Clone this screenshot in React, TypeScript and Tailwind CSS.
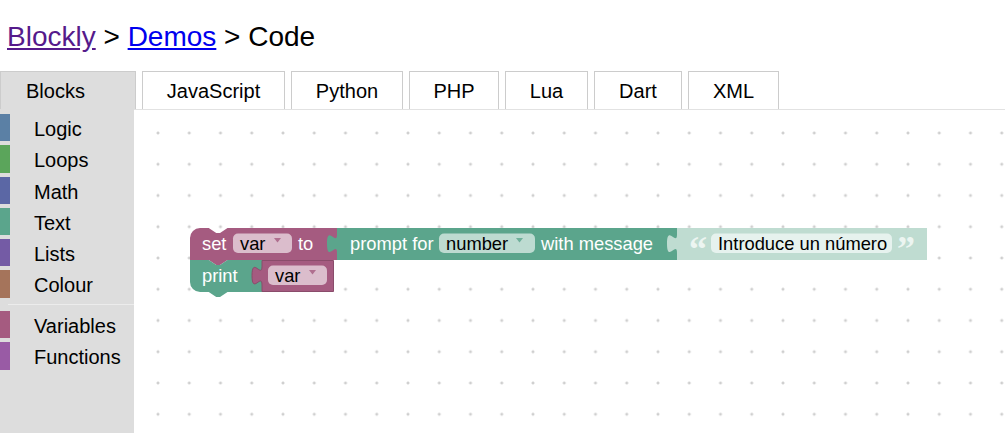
import React from 'react';

const tabs = [
  { label: 'JavaScript', cls: 'w-[143px]' },
  { label: 'Python', cls: 'w-[112px]' },
  { label: 'PHP', cls: 'w-[90px]' },
  { label: 'Lua', cls: 'w-[83px]' },
  { label: 'Dart', cls: 'w-[88px]' },
  { label: 'XML', cls: 'w-[91px]' },
];

const categories = [
  { label: 'Logic', bar: 'bg-[#5b80a5]' },
  { label: 'Loops', bar: 'bg-[#5ba55b]' },
  { label: 'Math', bar: 'bg-[#5b67a5]' },
  { label: 'Text', bar: 'bg-[#5ba58c]' },
  { label: 'Lists', bar: 'bg-[#745ba5]' },
  { label: 'Colour', bar: 'bg-[#a5745b]' },
];

const extra = [
  { label: 'Variables', bar: 'bg-[#a55b80]' },
  { label: 'Functions', bar: 'bg-[#995ba5]' },
];

function Category({ label, bar }: { label: string; bar: string }) {
  return (
    <div className="flex items-center h-[27.25px] mb-[4px] shrink-0">
      <div className={`w-[10px] h-full ${bar}`} />
      <span className="ml-[24px] mt-[4px] text-[20px] leading-[23px] text-black">{label}</span>
    </div>
  );
}

// output tab going up on the left edge of a block
const TAB = 'c0,-12.5 -10,10 -10,-9.375 s10,3.125 10,-9.375';

const quoteStyle = { fontFamily: '"Liberation Serif", serif', fontSize: '36px', fontWeight: 700 };

function Blocks() {
  const font = { fontFamily: '"Liberation Sans", Arial, sans-serif', fontSize: '18.33px' };
  return (
    <svg
      className="absolute left-0 top-0 overflow-visible"
      width="871"
      height="323"
      viewBox="134 110 871 323"
    >
      <g style={font}>
        {/* set var to */}
        <path
          d="M190,238 a10,10 0 0 1 10,-10 H208.75 l7.5,5 h3.75 l7.5,-5 H337 V260 H227.5 l-7.5,5 h-3.75 l-7.5,-5 H190 Z"
          fill="#a55b80"
        />
        <text x="202" y="249.5" fill="#fff">set</text>
        <rect x="233" y="233.5" width="59" height="19.5" rx="5" fill="#dbbdcc" />
        <text x="240" y="249.5" fill="#000">var</text>
        <polygon points="274,238 281,238 277.5,242.5" fill="#a55b80" fillOpacity="0.8" />
        <text x="298" y="249.5" fill="#fff">to</text>

        {/* print */}
        <path
          d="M190,260 H208.75 l7.5,5 h3.75 l7.5,-5 H262 V292 H227.5 l-7.5,5 h-3.75 l-7.5,-5 H200 a10,10 0 0 1 -10,-10 Z"
          fill="#5ba58c"
        />
        <text x="202" y="281.5" fill="#fff">print</text>

        {/* var getter */}
        <path d={`M262,260.5 H333.5 V291.5 H262 V285 ${TAB} Z`} fill="#a55b80" stroke="#8a4c6b" strokeWidth="1" />
        <rect x="268" y="265.5" width="59" height="19.5" rx="5" fill="#dbbdcc" />
        <text x="275" y="281.5" fill="#000">var</text>
        <polygon points="309,270 316,270 312.5,274.5" fill="#a55b80" fillOpacity="0.8" />

        {/* prompt for number with message */}
        <path d={`M337,228 H677 V260 H337 V253 ${TAB} Z`} fill="#5ba58c" />
        <text x="350" y="249.5" fill="#fff">prompt for</text>
        <rect x="439" y="233.5" width="96" height="19.5" rx="5" fill="#bddbd1" />
        <text x="446" y="249.5" fill="#000">number</text>
        <polygon points="516,238 523,238 519.5,242.5" fill="#5ba58c" fillOpacity="0.8" />
        <text x="541" y="249.5" fill="#fff">with message</text>

        {/* text shadow block */}
        <path d={`M677,228 H927 V260 H677 V253 ${TAB} Z`} fill="#bfdcd1" />
        <text x="689" y="261" fill="#ecf5f1" style={quoteStyle}>
          “
        </text>
        <rect x="711" y="233.5" width="181" height="19.5" rx="5" fill="#e6f2ee" />
        <text x="718" y="249.5" fill="#000">Introduce un número</text>
        <text x="897" y="261" fill="#ecf5f1" style={quoteStyle}>
          ”
        </text>
      </g>
    </svg>
  );
}

export default function App() {
  return (
    <div className="w-[1005px] h-[433px] overflow-hidden bg-white text-black font-['Liberation_Sans',Arial,sans-serif]">
      <h1 className="pt-[21px] pl-[7px] text-[28px] leading-[32px] font-normal">
        <a href="#" className="text-[#551a8b] underline">Blockly</a> &gt;{' '}
        <a href="#" className="text-[#0000ee] underline">Demos</a> &gt; Code
      </h1>

      <div className="mt-[18px] flex h-[38px]">
        <div className="w-[136px] h-full border border-b-0 border-[#ccc] bg-[#ddd] pl-[25px] flex items-center text-[20px]">
          Blocks
        </div>
        {tabs.map((t) => (
          <div
            key={t.label}
            className={`${t.cls} ml-[6px] h-full border border-b-0 border-[#ccc] bg-white flex items-center justify-center text-[20px]`}
          >
            {t.label}
          </div>
        ))}
      </div>

      <div className="flex h-[324px]">
        <div className="w-[134px] h-full bg-[#ddd] pt-[5px] flex flex-col">
          {categories.map((c) => (
            <Category key={c.label} {...c} />
          ))}
          <div className="ml-[8px] mt-[2.5px] mb-[6px] border-t border-[#ececec] shrink-0" />
          {extra.map((c) => (
            <Category key={c.label} {...c} />
          ))}
        </div>
        <div className="relative flex-1 h-full border-t border-[#e2e2e2] bg-white bg-[radial-gradient(circle,#cfcfcf_1.3px,transparent_1.7px)] bg-size-[31.25px_31.25px] bg-position-[8.375px_7.375px]">
          <Blocks />
        </div>
      </div>
    </div>
  );
}
